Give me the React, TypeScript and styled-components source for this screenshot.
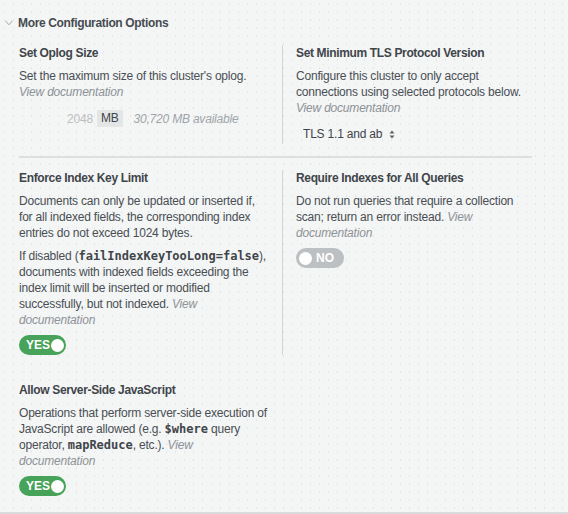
import React from 'react';
import styled, { createGlobalStyle } from 'styled-components';

const Global = createGlobalStyle`
  html, body { margin: 0; padding: 0; }
  body {
    background: #f4f5f5;
    font-family: "Liberation Sans", Arial, Helvetica, sans-serif;
  }
`;

const Page = styled.div`
  box-sizing: border-box;
  width: 568px;
  height: 514px;
  padding-top: 15px;
  border-bottom: 2px solid #d9dcdd;
  background-color: #f4f5f5;
  background-image:
    radial-gradient(circle at center, rgba(120, 130, 135, 0.13) 0.6px, transparent 1px),
    radial-gradient(circle at center, rgba(120, 130, 135, 0.1) 0.6px, transparent 1px);
  background-size: 9px 8px, 13px 11px;
  background-position: 0 0, 5px 4px;
  color: #494f54;
  font-size: 12px;
  line-height: 16px;
  letter-spacing: -0.2px;
`;

const Header = styled.div`
  display: flex;
  align-items: center;
  gap: 5px;
  padding-left: 5px;
  height: 16px;
  font-weight: 700;
  letter-spacing: -0.35px;
  color: #464c51;
`;

const Body = styled.div`
  margin-top: 14px;
  padding: 0 36px 0 19px;
`;

const Row = styled.div<{ $top?: number }>`
  display: grid;
  grid-template-columns: 263px 1fr;
  margin-top: ${(p) => p.$top ?? 0}px;
`;

const Cell = styled.div<{ $divided?: boolean }>`
  display: flex;
  flex-direction: column;
  align-items: flex-start;
  padding: ${(p) => (p.$divided ? '0 0 0 13px' : '0 4px 0 0')};
  border-left: ${(p) => (p.$divided ? '1px solid #d3d6d7' : 'none')};
`;

const Title = styled.div`
  font-weight: 700;
  letter-spacing: -0.35px;
  color: #3f454a;
`;

const Para = styled.p<{ $gap?: number }>`
  margin: ${(p) => p.$gap ?? 7}px 0 0;
  white-space: nowrap;
`;

const Doc = styled.span`
  font-style: italic;
  color: #8d9397;
`;

const Code = styled.code`
  font-family: "DejaVu Sans Mono", "Liberation Mono", monospace;
  font-weight: 700;
  font-size: 12px;
  letter-spacing: 0;
  color: #3f454a;
`;

const Rule = styled.div`
  height: 2px;
  background: #dcdfe0;
  margin: 12px 0;
`;

const OplogRow = styled.div`
  display: flex;
  align-items: center;
  margin-top: 10px;
  padding-left: 48px;
  height: 17px;
`;

const OplogValue = styled.span`
  color: #bcc0c3;
`;

const Unit = styled.span`
  margin-left: 4px;
  padding: 0 4px;
  height: 17px;
  line-height: 17px;
  background: #e3e5e6;
  color: #3f454a;
`;

const Available = styled.span`
  margin-left: 11px;
  font-style: italic;
  color: #a0a5a9;
`;

const Select = styled.div`
  display: flex;
  align-items: center;
  margin-top: 8px;
  height: 20px;
  padding-left: 7px;
  color: #3f454a;
`;

const SelectText = styled.span`
  width: 82px;
  overflow: hidden;
  white-space: nowrap;
`;

const Arrows = styled.svg`
  margin-left: 4px;
`;

const ToggleTrack = styled.div<{ $on: boolean }>`
  margin-top: 7px;
  display: flex;
  align-items: center;
  flex-direction: ${(p) => (p.$on ? 'row' : 'row-reverse')};
  justify-content: flex-end;
  gap: ${(p) => (p.$on ? 1 : 4)}px;
  box-sizing: border-box;
  width: ${(p) => (p.$on ? 47 : 48)}px;
  height: 20px;
  padding: 0 ${(p) => (p.$on ? 2 : 3)}px;
  border-radius: 10px;
  background: ${(p) => (p.$on ? '#47a35a' : '#bcc0c2')};
  color: #fff;
  font-weight: 700;
  font-size: 12px;
  letter-spacing: 0;
`;

const Knob = styled.span`
  width: 13px;
  height: 13px;
  border-radius: 50%;
  background: #fff;
  flex: none;
`;

function Toggle({ on }: { on: boolean }) {
  return (
    <ToggleTrack $on={on}>
      <span>{on ? 'YES' : 'NO'}</span>
      <Knob />
    </ToggleTrack>
  );
}

export default function App() {
  return (
    <Page>
      <Global />
      <Header>
        <svg width="8" height="6" viewBox="0 0 8 6">
          <polyline points="0.5,0.8 4,4.8 7.5,0.8" fill="none" stroke="#a3a8ab" strokeWidth="1" />
        </svg>
        <span>More Configuration Options</span>
      </Header>
      <Body>
        <Row>
          <Cell>
            <Title>Set Oplog Size</Title>
            <Para>
              Set the maximum size of this cluster's oplog.
              <br />
              <Doc>View documentation</Doc>
            </Para>
            <OplogRow>
              <OplogValue>2048</OplogValue>
              <Unit>MB</Unit>
              <Available>30,720 MB available</Available>
            </OplogRow>
          </Cell>
          <Cell $divided>
            <Title>Set Minimum TLS Protocol Version</Title>
            <Para>
              Configure this cluster to only accept
              <br />
              connections using selected protocols below.
              <br />
              <Doc>View documentation</Doc>
            </Para>
            <Select>
              <SelectText>TLS 1.1 and ab</SelectText>
              <Arrows width="6" height="9" viewBox="0 0 6 9">
                <path d="M3 0.5 L5.5 3.5 L0.5 3.5 Z M3 8.5 L5.5 5.5 L0.5 5.5 Z" fill="#5d6368" />
              </Arrows>
            </Select>
          </Cell>
        </Row>
        <Rule />
        <Row>
          <Cell>
            <Title>Enforce Index Key Limit</Title>
            <Para>
              Documents can only be updated or inserted if,
              <br />
              for all indexed fields, the corresponding index
              <br />
              entries do not exceed 1024 bytes.
            </Para>
            <Para>
              If disabled (<Code>failIndexKeyTooLong=false</Code>),
              <br />
              documents with indexed fields exceeding the
              <br />
              index limit will be inserted or modified
              <br />
              successfully, but not indexed. <Doc>View</Doc>
              <br />
              <Doc>documentation</Doc>
            </Para>
            <Toggle on />
          </Cell>
          <Cell $divided>
            <Title>Require Indexes for All Queries</Title>
            <Para>
              Do not run queries that require a collection
              <br />
              scan; return an error instead. <Doc>View</Doc>
              <br />
              <Doc>documentation</Doc>
            </Para>
            <Toggle on={false} />
          </Cell>
        </Row>
        <Row $top={27}>
          <Cell>
            <Title>Allow Server-Side JavaScript</Title>
            <Para>
              Operations that perform server-side execution of
              <br />
              JavaScript are allowed (e.g. <Code>$where</Code> query
              <br />
              operator, <Code>mapReduce</Code>, etc.). <Doc>View</Doc>
              <br />
              <Doc>documentation</Doc>
            </Para>
            <Toggle on />
          </Cell>
        </Row>
      </Body>
    </Page>
  );
}
